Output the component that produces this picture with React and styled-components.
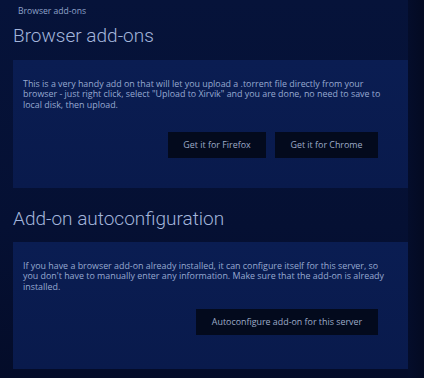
import React from 'react';
import styled, { createGlobalStyle } from 'styled-components';

const GlobalStyle = createGlobalStyle`
  html, body {
    margin: 0;
    padding: 0;
    height: 100%;
    background: #040c27;
  }
  body {
    font-family: "Open Sans", Lato, sans-serif;
  }
`

const Page = styled.div`
  width: 424px;
  height: 378px;
  overflow: hidden;
  display: flex;
  background: linear-gradient(180deg, #06133a 0%, #051033 60%, #040c29 100%);
`

const Main = styled.div`
  width: 408px;
  padding: 0 0 0 13px;
  box-sizing: border-box;
`

const Gutter = styled.div`
  flex: 1;
  background: linear-gradient(90deg, #040d2b 0%, #030a22 100%);
`

const Crumb = styled.div`
  font-size: 8.6px;
  color: #8ea2c9;
  padding: 6px 0 0 5px;
  height: 10px;
  line-height: 10px;
`

const Heading = styled.h1`
  margin: 0;
  font-family: Roboto, "Open Sans", sans-serif;
  font-size: 19px;
  font-weight: 300;
  color: #a3b5db;
  line-height: 24px;
  padding: ${(p) => p.$top}px 0 0 0;
  height: 24px;
`

const Card = styled.div`
  margin-top: ${(p) => p.$top}px;
  background: linear-gradient(180deg, #0a1d52 0%, #091a4c 100%);
  padding: 19px 30px 0 10px;
  height: ${(p) => p.$height}px;
  box-sizing: border-box;
`

const Text = styled.p`
  margin: 0 -12px 0 0;
  font-size: 8.9px;
  line-height: 10.3px;
  color: #97a9d0;
`

const Actions = styled.div`
  display: flex;
  justify-content: flex-end;
  gap: 9px;
  margin-top: ${(p) => p.$top}px;
`

const Button = styled.button`
  height: 26px;
  padding: 0;
  width: ${(p) => p.$w}px;
  border: none;
  background: #030a1d;
  color: #9eaac8;
  font-family: inherit;
  font-size: 8.9px;
  cursor: pointer;
`

export default function App() {
  return (
    <>
      <GlobalStyle />
      <Page>
        <Main>
          <Crumb>Browser add-ons</Crumb>
          <Heading $top={8}>Browser add-ons</Heading>
          <Card $top={12} $height={128}>
            <Text>
              This is a very handy add on that will let you upload a .torrent file directly from your
              browser - just right click, select "Upload to Xirvik" and you are done, no need to save to
              local disk, then upload.
            </Text>
            <Actions $top={22}>
              <Button $w={98}>Get it for Firefox</Button>
              <Button $w={103}>Get it for Chrome</Button>
            </Actions>
          </Card>
          <Heading $top={19}>Add-on autoconfiguration</Heading>
          <Card $top={11} $height={127}>
            <Text>
              If you have a browser add-on already installed, it can configure itself for this server, so
              you don't have to manually enter any information. Make sure that the add-on is already
              installed.
            </Text>
            <Actions $top={17}>
              <Button $w={182}>Autoconfigure add-on for this server</Button>
            </Actions>
          </Card>
        </Main>
        <Gutter />
      </Page>
    </>
  );
}
